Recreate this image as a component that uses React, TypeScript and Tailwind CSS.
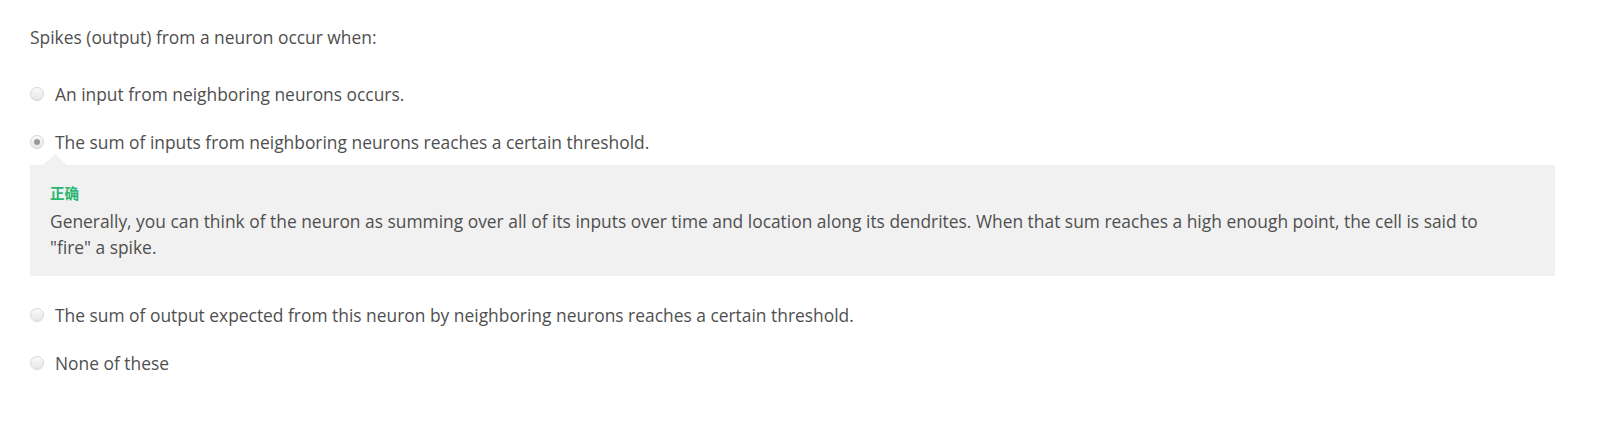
import React from "react";

const OPTIONS = [
  { id: "a", label: "An input from neighboring neurons occurs." },
  { id: "b", label: "The sum of inputs from neighboring neurons reaches a certain threshold." },
  { id: "c", label: "The sum of output expected from this neuron by neighboring neurons reaches a certain threshold." },
  { id: "d", label: "None of these" },
];

const SELECTED = "b";

function Radio({ checked }: { checked: boolean }) {
  return (
    <span className="flex h-[14px] w-[14px] shrink-0 items-center justify-center rounded-full border border-[#d6d6d6] bg-gradient-to-b from-[#fafafa] to-[#e6e6e6]">
      {checked && <span className="h-[6px] w-[6px] rounded-full bg-[#9a9a9a]" />}
    </span>
  );
}

export default function App() {
  return (
    <div className="min-h-[426px] bg-white pl-[30px] pr-[59px] pt-[25px] text-[17.4px] leading-6 text-[#4f4f4f] [font-family:'Open_Sans',sans-serif]">
      <p className="h-6">Spikes (output) from a neuron occur when:</p>

      <div className="mt-[33px] flex flex-col">
        {OPTIONS.map((opt, i) => (
          <div key={opt.id} className={i === 0 ? "" : opt.id === "c" ? "mt-[27px]" : "mt-6"}>
            <label className="flex h-6 cursor-pointer items-center gap-[11px]">
              <Radio checked={opt.id === SELECTED} />
              <span>{opt.label}</span>
            </label>

            {opt.id === SELECTED && (
              <div className="relative mt-[11px] bg-[#f1f1f1] pb-4 pl-5 pr-[60px] pt-[19px]">
                {/* little arrow pointing to the chosen answer */}
                <span className="absolute -top-[11px] left-[13px] h-0 w-0 border-x-[12px] border-b-[11px] border-x-transparent border-b-[#f1f1f1]" />
                <div className="text-[14.5px] font-bold leading-5 text-[#2bb673] [font-family:'Open_Sans','Noto_Sans_CJK_SC',sans-serif]">正确</div>
                <p className="mt-[4px] leading-[26px]">
                  Generally, you can think of the neuron as summing over all of its inputs over time and location along its dendrites. When that sum reaches a high enough point, the cell is said to "fire" a spike.
                </p>
              </div>
            )}
          </div>
        ))}
      </div>
    </div>
  );
}
